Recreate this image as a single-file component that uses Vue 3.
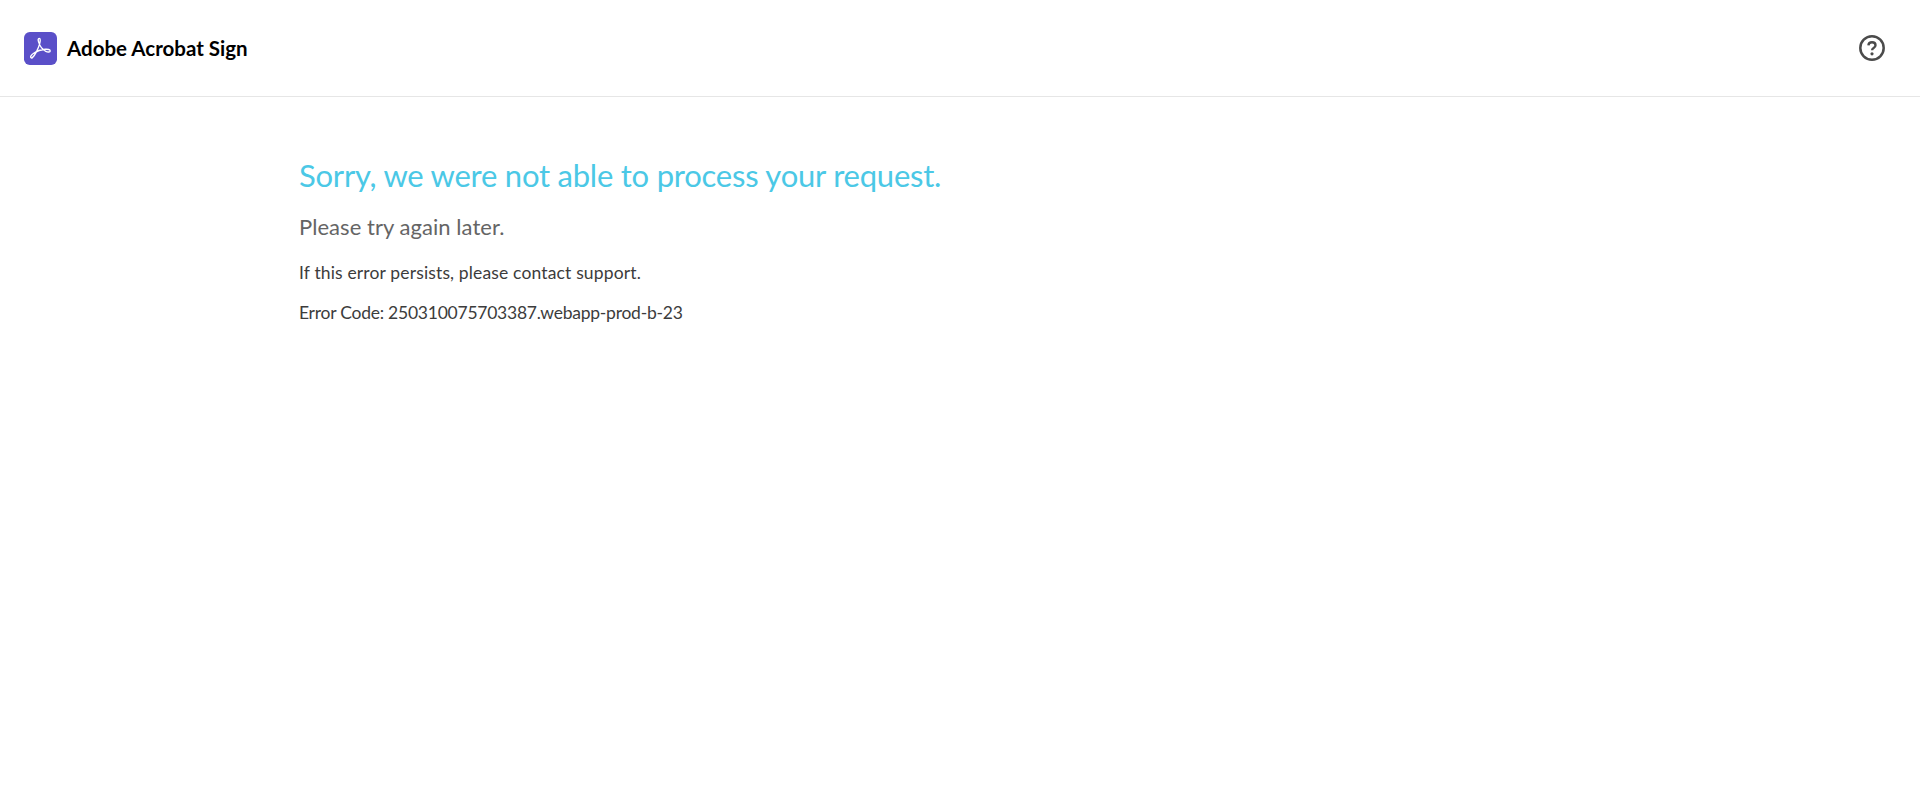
<script setup>
const errorCode = '250310075703387.webapp-prod-b-23'
</script>

<template>
  <div class="page">
    <header class="header">
      <div class="brand">
        <svg class="logo" width="33" height="33" viewBox="0 0 34 34" aria-hidden="true">
          <rect width="34" height="34" rx="6" fill="#5a4fc8" />
          <path
            d="M7.200 26.400c-1.200-.8.6-3 2.800-4.500 3.500-2.400 8-3.800 12-4.100 2.500-.2 5 .3 5 1.700 0 1.300-2.500 1.500-4.500.5-3.500-1.800-6.500-6.500-7.500-9.800-.6-2-.6-3.700.7-3.700 1.400 0 1.200 2.800.4 5.800-1.200 4.500-4.800 11.800-7.500 14.100-.6.500-1 .5-1.400 0z"
            fill="none"
            stroke="#fff"
            stroke-width="1.400"
            stroke-linejoin="round"
          />
        </svg>
        <span class="brand-name">Adobe Acrobat Sign</span>
      </div>
      <button class="help" type="button" aria-label="Help">
        <svg width="26" height="26" viewBox="0 0 26 26" aria-hidden="true">
          <circle cx="13" cy="13" r="11.700" fill="none" stroke="#4b4b4b" stroke-width="2.500" />
          <path
            d="M9.400 10.300c.2-1.900 1.700-3 3.600-3 2 0 3.500 1.200 3.500 2.900 0 1.400-.8 2.100-1.900 2.800-1 .6-1.500 1.100-1.500 2.300"
            fill="none"
            stroke="#4b4b4b"
            stroke-width="2.400"
          />
          <circle cx="13" cy="18.800" r="1.600" fill="#4b4b4b" />
        </svg>
      </button>
    </header>

    <main class="content">
      <h1 class="title">Sorry, we were not able to process your request.</h1>
      <h2 class="subtitle">Please try again later.</h2>
      <p class="line support">If this error persists, please contact support.</p>
      <p class="line code">Error Code: {{ errorCode }}</p>
    </main>
  </div>
</template>

<style>
html,
body {
  background: #fff;
}
</style>

<style scoped>
.page {
  min-height: 800px;
  font-family: 'Lato', 'Noto Sans', sans-serif;
  background: #fff;
}

.header {
  height: 97px;
  box-sizing: border-box;
  border-bottom: 1px solid #e6e6e6;
  display: flex;
  align-items: center;
  justify-content: space-between;
  padding: 0 35px 0 24px;
}

.brand {
  display: flex;
  align-items: center;
  gap: 10px;
}

.brand-name {
  font-size: 20.500px;
  font-weight: 700;
  color: #000;
}

.help {
  border: none;
  background: none;
  padding: 0;
  display: flex;
}

.content {
  padding: 57px 0 0 299px;
}

.title {
  margin: 0;
  font-size: 31px;
  line-height: 42px;
  font-weight: 400;
  letter-spacing: -0.230px;
  color: #4bc8e6;
}

.subtitle {
  margin: 17px 0 0;
  font-size: 22px;
  line-height: 28px;
  font-weight: 400;
  letter-spacing: 0.050px;
  color: #656565;
}

.line {
  margin: 18px 0 0;
  font-size: 17.500px;
  line-height: 22px;
  color: #3c3c3c;
}

.support {
  margin-top: 21px;
  letter-spacing: 0.150px;
}

.code {
  letter-spacing: -0.240px;
}
</style>
